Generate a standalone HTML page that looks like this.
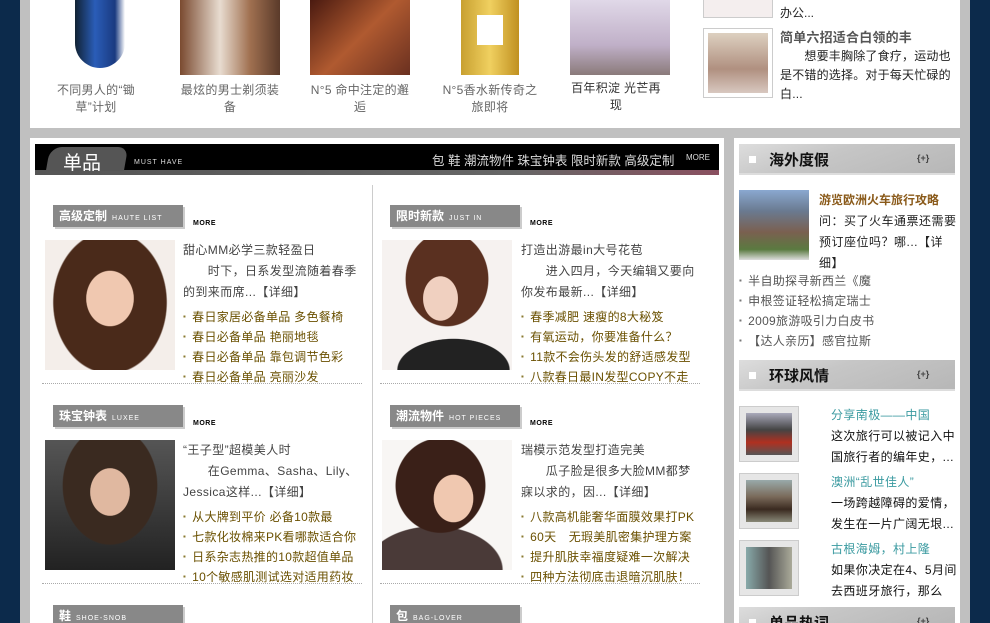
<!DOCTYPE html>
<html style="width:990px;height:623px;overflow:hidden"><head><meta charset="utf-8"><style>
*{margin:0;padding:0;box-sizing:border-box}
body{width:990px;height:623px;overflow:hidden;background:#0c2a4b;position:relative;font-family:"Liberation Sans","Noto Sans CJK SC",sans-serif;font-size:12px;color:#333}
.a{position:absolute}
.w{background:#fff}
.cap{color:#666;text-align:center;width:100px;line-height:17px;font-size:12px;letter-spacing:.3px}
.tab{background:#888;color:#fff;font-weight:bold;font-size:12px;height:22px;line-height:22px;padding-left:6px;box-shadow:2px 2px 0 #ccc;width:130px}
.tab small{font-size:7px;font-weight:normal;letter-spacing:1px;margin-left:5px}
.more{font-size:7px;font-weight:bold;color:#000;letter-spacing:.5px}
.t{color:#444;font-size:12px;letter-spacing:.4px;line-height:21px}
ul{list-style:none}
li{font-size:12px;letter-spacing:.3px;line-height:19px;color:#6a5000;white-space:nowrap;overflow:hidden}
li:before{content:"▪";color:#8a7a30;font-size:8px;margin-right:6px;vertical-align:2px}
.rl li{color:#555}
.rl li:before{color:#777}
.rh{background:linear-gradient(160deg,#ddd 0,#c6c6c6 40%,#b7b7b7 100%);height:31px;border-bottom:2px solid #ddd;overflow:hidden}
.rh b{position:absolute;left:30px;top:5px;font-size:15px;color:#111}
.rh i{position:absolute;left:10px;top:12px;width:7px;height:7px;background:#fff}
.rh s{position:absolute;left:178px;top:9px;font-size:9px;text-decoration:none;color:#444;font-weight:bold}
.tb{border:1px solid #ccc;background:#e6e6e6;padding:6px}
</style></head><body>
<div class="a" style="left:20px;top:0;width:950px;height:623px;background:#c0c0c0"></div>
<!-- top box -->
<div class="a w" style="left:30px;top:0;width:930px;height:128px"></div>
<div class="a" style="left:75px;top:0;width:50px;height:68px;background:linear-gradient(90deg,#123 0,#2a5db8 40%,#1a3a80 80%,#fff 100%);border-radius:0 0 30px 30px"></div>
<div class="a" style="left:180px;top:0;width:100px;height:75px;background:linear-gradient(90deg,#7a4a30,#e8dcd0 40%,#a07050 70%,#5a3a2a)"></div>
<div class="a" style="left:310px;top:0;width:100px;height:75px;background:linear-gradient(135deg,#4a1a10,#b05a30 50%,#6a3020)"></div>
<div class="a" style="left:461px;top:0;width:58px;height:75px;background:linear-gradient(90deg,#c8a030,#f0d060 50%,#c09020)"></div>
<div class="a" style="left:477px;top:15px;width:26px;height:30px;background:#fff"></div>
<div class="a" style="left:570px;top:0;width:100px;height:75px;background:linear-gradient(180deg,#e0d8e8,#c0b0c8 60%,#8a7a7a)"></div>
<div class="a cap" style="left:50px;top:82px;width:92px">不同男人的“锄草”计划</div>
<div class="a cap" style="left:180px;top:82px">最炫的男士剃须装备</div>
<div class="a cap" style="left:310px;top:82px">N°5 命中注定的邂逅</div>
<div class="a cap" style="left:440px;top:82px">N°5香水新传奇之旅即将</div>
<div class="a cap" style="left:570px;top:80px;width:92px;color:#333">百年积淀 光芒再现</div>
<div class="a" style="left:703px;top:-2px;width:70px;height:20px;border:1px solid #ccc;background:#f4eeee"></div>
<div class="a" style="left:703px;top:28px;width:70px;height:70px;border:1px solid #ccc;padding:4px"><div style="width:100%;height:100%;background:linear-gradient(180deg,#ddd0c0,#b09080 60%,#d8c8c0)"></div></div>
<div class="a" style="left:780px;top:4px;font-size:12px;line-height:19px;color:#222">办公...</div>
<div class="a" style="left:780px;top:28px;width:174px;font-size:12px;letter-spacing:.2px;line-height:19px;color:#222"><div style="font-weight:bold;color:#555;font-size:13px">简单六招适合白领的丰</div>&emsp;&emsp;想要丰胸除了食疗，运动也是不错的选择。对于每天忙碌的白...</div>
<!-- left box -->
<div class="a w" style="left:30px;top:138px;width:694px;height:485px"></div>
<div class="a" style="left:35px;top:144px;width:684px;height:31px;background:#000"></div>
<div class="a" style="left:35px;top:170px;width:684px;height:5px;background:linear-gradient(90deg,#555,#666 70%,#8a5060)"></div>
<div class="a" style="left:48px;top:147px;width:78px;height:24px;background:#555;border-radius:12px 10px 0 0;transform:skewX(-10deg)"></div>
<div class="a" style="left:63px;top:148px;color:#fff;font-size:19px">单品</div>
<div class="a" style="left:134px;top:159px;color:#ddd;font-size:7px;letter-spacing:1px">MUST HAVE</div>
<div class="a" style="left:432px;top:150px;color:#ddd;font-size:12.5px">包 鞋 潮流物件 珠宝钟表 限时新款 高级定制</div>
<div class="a" style="left:686px;top:153px;color:#ddd;font-size:8px">MORE</div>
<div class="a" style="left:372px;top:185px;width:1px;height:438px;background:#ccc"></div>

<!-- left col sec1 -->
<div class="a tab" style="left:53px;top:205px">高级定制<small>HAUTE LIST</small></div>
<div class="a more" style="left:193px;top:220px">MORE</div>
<div class="a" style="left:45px;top:240px;width:130px;height:130px;background:radial-gradient(ellipse 30% 35% at 50% 45%,#f0c8b0 60%,transparent 62%),radial-gradient(ellipse 48% 60% at 50% 48%,#4a2a1a 90%,transparent 92%),#f4eeea"></div>
<div class="a t" style="left:183px;top:240px;width:180px"><div>甜心MM必学三款轻盈日</div>&emsp;&emsp;时下，日系发型流随着春季的到来而席...【详细】</div>
<ul class="a" style="left:183px;top:307px;width:178px"><li>春日家居必备单品 多色餐椅</li><li>春日必备单品 艳丽地毯</li><li>春日必备单品 靠包调节色彩</li><li>春日必备单品 亮丽沙发</li></ul>
<div class="a" style="left:42px;top:383px;width:320px;border-top:1px dotted #aaa"></div>
<!-- left col sec2 -->
<div class="a tab" style="left:53px;top:405px">珠宝钟表<small>LUXEE</small></div>
<div class="a more" style="left:193px;top:420px">MORE</div>
<div class="a" style="left:45px;top:440px;width:130px;height:130px;background:radial-gradient(ellipse 25% 30% at 50% 40%,#e0b8a0 60%,transparent 62%),radial-gradient(ellipse 40% 50% at 50% 35%,#3a2a20 90%,transparent 92%),linear-gradient(180deg,#555 0,#222 100%)"></div>
<div class="a t" style="left:183px;top:440px;width:180px"><div>“王子型”超模美人时</div>&emsp;&emsp;在Gemma、Sasha、Lily、Jessica这样...【详细】</div>
<ul class="a" style="left:183px;top:507px;width:178px"><li>从大牌到平价 必备10款最</li><li>七款化妆棉来PK看哪款适合你</li><li>日系杂志热推的10款超值单品</li><li>10个敏感肌测试选对适用药妆</li></ul>
<div class="a" style="left:42px;top:583px;width:320px;border-top:1px dotted #aaa"></div>
<div class="a tab" style="left:53px;top:605px">鞋<small>SHOE-SNOB</small></div>

<!-- right col -->
<div class="a tab" style="left:390px;top:205px">限时新款<small>JUST IN</small></div>
<div class="a more" style="left:530px;top:220px">MORE</div>
<div class="a" style="left:382px;top:240px;width:130px;height:130px;background:radial-gradient(ellipse 22% 28% at 45% 45%,#f0d0c0 60%,transparent 62%),radial-gradient(ellipse 35% 40% at 50% 30%,#5a3020 90%,transparent 92%),radial-gradient(ellipse 45% 25% at 55% 100%,#222 95%,transparent 97%),#f6f2f0"></div>
<div class="a t" style="left:521px;top:240px;width:180px"><div>打造出游最in大号花苞</div>&emsp;&emsp;进入四月，今天编辑又要向你发布最新...【详细】</div>
<ul class="a" style="left:521px;top:307px;width:178px"><li>春季减肥 速瘦的8大秘笈</li><li>有氧运动，你要准备什么？</li><li>11款不会伤头发的舒适感发型</li><li>八款春日最IN发型COPY不走</li></ul>
<div class="a" style="left:380px;top:383px;width:320px;border-top:1px dotted #aaa"></div>
<div class="a tab" style="left:390px;top:405px">潮流物件<small>HOT PIECES</small></div>
<div class="a more" style="left:530px;top:420px">MORE</div>
<div class="a" style="left:382px;top:440px;width:130px;height:130px;background:radial-gradient(ellipse 25% 30% at 55% 45%,#f0c8b0 60%,transparent 62%),radial-gradient(ellipse 38% 40% at 45% 35%,#3a2018 90%,transparent 92%),radial-gradient(ellipse 55% 35% at 40% 100%,#4a3a38 95%,transparent 97%),#f8f6f4"></div>
<div class="a t" style="left:521px;top:440px;width:180px"><div>瑞模示范发型打造完美</div>&emsp;&emsp;瓜子脸是很多大脸MM都梦寐以求的，因...【详细】</div>
<ul class="a" style="left:521px;top:507px;width:178px"><li>八款高机能奢华面膜效果打PK</li><li>60天　无瑕美肌密集护理方案</li><li>提升肌肤幸福度疑难一次解决</li><li>四种方法彻底击退暗沉肌肤！</li></ul>
<div class="a" style="left:380px;top:583px;width:320px;border-top:1px dotted #aaa"></div>
<div class="a tab" style="left:390px;top:605px">包<small>BAG-LOVER</small></div>

<!-- right box -->
<div class="a w" style="left:734px;top:138px;width:226px;height:485px"></div>
<div class="a rh" style="left:739px;top:144px;width:216px"><i></i><b>海外度假</b><s>{+}</s></div>
<div class="a" style="left:739px;top:190px;width:70px;height:70px;background:linear-gradient(180deg,#8aa8d0 0,#6a7a90 30%,#7a6050 60%,#5a7a40 85%,#ddd 100%)"></div>
<div class="a" style="left:819px;top:190px;width:138px;font-size:12px;letter-spacing:.5px;line-height:21px;color:#222"><div style="font-weight:bold;color:#8a5a1a;letter-spacing:0">游览欧洲火车旅行攻略</div>问：买了火车通票还需要预订座位吗？哪...【详细】</div>
<ul class="a rl" style="left:739px;top:271px;width:216px"><li>半自助探寻新西兰《魔</li><li>申根签证轻松搞定瑞士</li><li>2009旅游吸引力白皮书</li><li>【达人亲历】感官拉斯</li></ul>
<div class="a rh" style="left:739px;top:360px;width:216px"><i></i><b>环球风情</b><s>{+}</s></div>
<div class="a tb" style="left:739px;top:406px;width:60px;height:56px"><div style="height:100%;background:linear-gradient(180deg,#aab 0,#444 40%,#b03020 70%,#555)"></div></div>
<div class="a tb" style="left:739px;top:473px;width:60px;height:56px"><div style="height:100%;background:linear-gradient(180deg,#9aa 0,#7a6a5a 40%,#3a2a20 70%,#887)"></div></div>
<div class="a tb" style="left:739px;top:540px;width:60px;height:56px"><div style="height:100%;background:linear-gradient(90deg,#8aa 0,#555 50%,#aa9 100%)"></div></div>
<div class="a" style="left:831px;top:405px;width:126px;height:63px;overflow:hidden;font-size:12px;letter-spacing:.4px;line-height:21px;color:#111"><div style="color:#3a9aa0">分享南极——中国</div>这次旅行可以被记入中国旅行者的编年史，...</div>
<div class="a" style="left:831px;top:472px;width:126px;height:63px;overflow:hidden;font-size:12px;letter-spacing:.4px;line-height:21px;color:#111"><div style="color:#3a9aa0">澳洲“乱世佳人”</div>一场跨越障碍的爱情，发生在一片广阔无垠...</div>
<div class="a" style="left:831px;top:539px;width:126px;height:66px;overflow:hidden;font-size:12px;letter-spacing:.4px;line-height:21px;color:#111"><div style="color:#3a9aa0">古根海姆，村上隆</div>如果你决定在4、5月间去西班牙旅行，那么</div>
<div class="a rh" style="left:739px;top:607px;width:216px;height:16px;border:0"><i></i><b>单品热词</b><s>{+}</s></div>
</body></html>
